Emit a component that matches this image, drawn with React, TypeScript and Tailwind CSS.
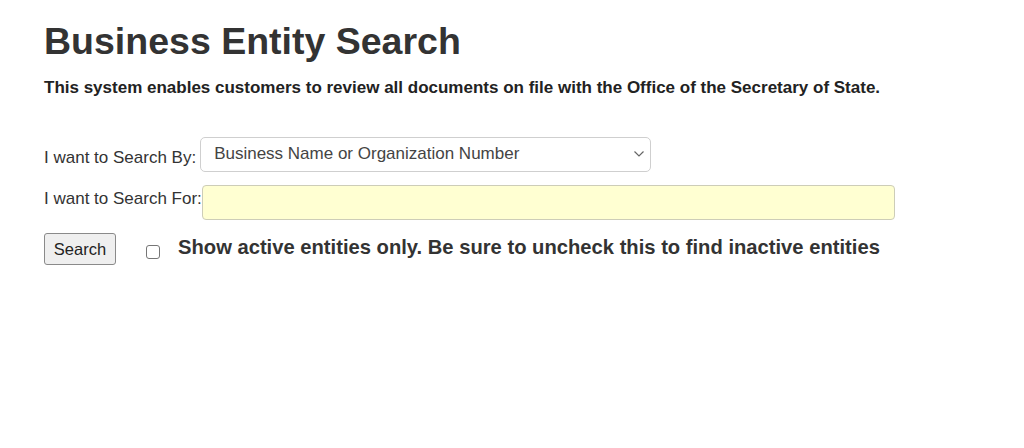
import React from "react";

export default function App() {
  return (
    <div
      className="w-[1024px] h-[448px] bg-white text-[#333] pl-[44px]"
      style={{ fontFamily: '"Liberation Sans", Arial, sans-serif' }}
    >
      <h1 className="pt-[20px] text-[37.5px] leading-[42px] font-bold text-[#333]">
        Business Entity Search
      </h1>
      <p className="mt-[16px] text-[17px] leading-[19px] font-bold text-[#222]">
        This system enables customers to review all documents on file with the Office of the Secretary of State.
      </p>

      <div className="mt-[40px] flex items-center h-[34px]">
        <span className="text-[17px] text-[#333] mt-[8px]">I want to Search By:</span>
        <div className="ml-[4px] w-[451px] h-[35px] border border-[#cfcfcf] rounded-[5px] bg-white flex items-center justify-between pl-[13px] pr-[5px]">
          <span className="text-[17px] text-[#444]">Business Name or Organization Number</span>
          <svg width="12" height="8" viewBox="0 0 12 8" fill="none">
            <path d="M1.5 1.5 L6 6 L10.5 1.5" stroke="#666" strokeWidth="1.2" />
          </svg>
        </div>
      </div>

      <div className="mt-[14px] flex items-center h-[35px]">
        <span className="text-[17px] text-[#333] -mt-[7px]">I want to Search For:</span>
        <div className="w-[693px] h-[35px] border border-[#cdcdb8] rounded-[4px] bg-[#ffffd2]" />
      </div>

      <div className="mt-[13px] flex items-center">
        <button className="w-[72px] h-[32px] border border-[#8a8a8a] rounded-[3px] bg-[#efefef] text-[16.5px] text-[#222] flex items-center justify-center">
          Search
        </button>
        <div className="ml-[30px] mt-[6px] w-[14px] h-[14px] border border-[#767676] rounded-[3px] bg-white" />
        <span className="ml-[18px] text-[20.2px] font-bold text-[#333] -mt-[3px]">
          Show active entities only. Be sure to uncheck this to find inactive entities
        </span>
      </div>
    </div>
  );
}
